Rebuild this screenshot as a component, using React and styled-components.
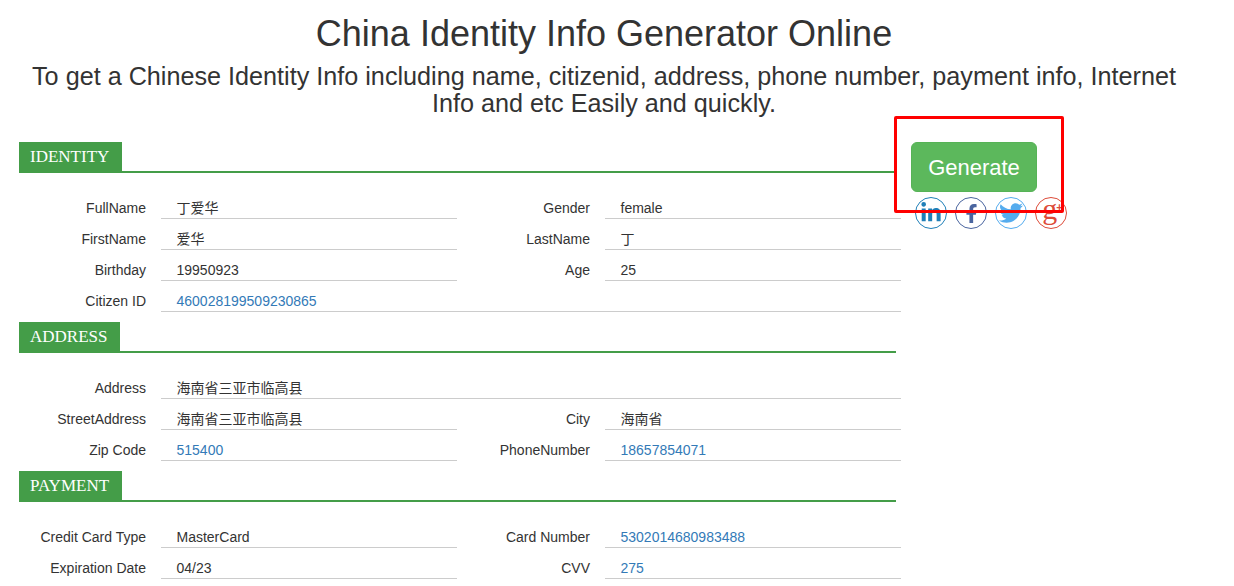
import React from "react";
import styled, { createGlobalStyle } from "styled-components";
import { FaLinkedinIn, FaFacebookF, FaTwitter } from "react-icons/fa";

const GlobalStyle = createGlobalStyle`
    html, body {
        margin: 0;
        height: 586px;
        overflow: hidden;
        background: #fff;
        font-family: "Liberation Sans", "Noto Sans CJK SC", sans-serif;
        font-size: 14px;
        color: #333;
    }
`;

const Page = styled.div`
    position: relative;
    width: 1234px;
    height: 586px;
    overflow: hidden;
`;

const Header = styled.header`
    width: 1208px;
    text-align: center;
`;

const Title = styled.h1`
    margin: 0;
    padding-top: 14px;
    font-size: 36px;
    line-height: 40px;
    font-weight: 400;
`;

const Subtitle = styled.h3`
    margin: 9px 0 0;
    padding: 0 15px;
    font-size: 25.2px;
    line-height: 27px;
    font-weight: 400;
`;

const Columns = styled.div`
    display: flex;
    margin-top: 25px;
    padding-left: 19px;
`;

const Main = styled.main`
    width: 882px;
`;

const Section = styled.section`
    margin-bottom: 10px;
`;

const SectionHead = styled.div`
    width: 877px;
    height: 31px;
    box-sizing: border-box;
    border-bottom: 2px solid #449d48;
`;

const SectionLabel = styled.h4`
    display: inline-block;
    margin: 0;
    height: 31px;
    padding: 0 13px 0 11px;
    box-sizing: border-box;
    background: #449d48;
    color: #fff;
    font-family: "Liberation Serif", serif;
    font-size: 17px;
    font-weight: 400;
    line-height: 29px;
`;

const Rows = styled.div`
    display: grid;
    grid-template-columns: 127px 296px 118px 296px;
    grid-auto-rows: 31px;
    column-gap: 15px;
    margin-top: 15px;
`;

const Label = styled.label`
    padding-top: 10px;
    text-align: right;
    line-height: 20px;
`;

const Value = styled.div`
    grid-column: ${props => (props.wide ? "2 / 5" : "auto")};
    padding: 10px 0 0 15.5px;
    box-sizing: border-box;
    border-bottom: 1px solid #ccc;
    line-height: 20px;
    color: ${props => (props.link ? "#337ab7" : "#333")};
`;

const Side = styled.aside`
    padding-left: 10px;
`;

const GenerateButton = styled.button`
    display: block;
    width: 126px;
    height: 50px;
    padding: 2px 0 0;
    border: 1px solid #56b356;
    border-radius: 6px;
    background: #5cb85c;
    color: #fff;
    font-family: inherit;
    font-size: 22px;
`;

const Social = styled.div`
    display: flex;
    gap: 8px;
    margin: 5px 0 0 4px;
`;

const SocialLink = styled.a`
    display: flex;
    align-items: center;
    justify-content: center;
    width: 32px;
    height: 32px;
    box-sizing: border-box;
    border: 1px solid ${props => props.color};
    border-radius: 50%;
    color: ${props => props.color};
    font-size: ${props => props.size}px;
`;

const GoogleG = styled.span`
    font-family: "Liberation Serif", serif;
    font-size: 30px;
    line-height: 30px;
    margin: -9px 0 0 3px;
`;

const GooglePlus = styled.span`
    font-family: "Liberation Sans", sans-serif;
    font-size: 11px;
    font-weight: 700;
    line-height: 11px;
    margin: -12px 0 0 -1px;
`;

const Highlight = styled.div`
    position: absolute;
    left: 894px;
    top: 116px;
    width: 170px;
    height: 97px;
    box-sizing: border-box;
    border: 3px solid #f00;
    border-radius: 2px;
    pointer-events: none;
`;

const sections = [
    {
        title: "IDENTITY",
        fields: [
            { label: "FullName", value: "丁爱华" },
            { label: "Gender", value: "female" },
            { label: "FirstName", value: "爱华" },
            { label: "LastName", value: "丁" },
            { label: "Birthday", value: "19950923" },
            { label: "Age", value: "25" },
            { label: "Citizen ID", value: "460028199509230865", link: true, wide: true }
        ]
    },
    {
        title: "ADDRESS",
        fields: [
            { label: "Address", value: "海南省三亚市临高县", wide: true },
            { label: "StreetAddress", value: "海南省三亚市临高县" },
            { label: "City", value: "海南省" },
            { label: "Zip Code", value: "515400", link: true },
            { label: "PhoneNumber", value: "18657854071", link: true }
        ]
    },
    {
        title: "PAYMENT",
        fields: [
            { label: "Credit Card Type", value: "MasterCard" },
            { label: "Card Number", value: "5302014680983488", link: true },
            { label: "Expiration Date", value: "04/23" },
            { label: "CVV", value: "275", link: true }
        ]
    }
];

export default function App() {
    return (
        <Page>
            <GlobalStyle />
            <Header>
                <Title>China Identity Info Generator Online</Title>
                <Subtitle>
                    To get a Chinese Identity Info including name, citizenid, address, phone number, payment info, Internet Info and etc Easily and quickly.
                </Subtitle>
            </Header>
            <Columns>
                <Main>
                    {sections.map(section => (
                        <Section key={section.title}>
                            <SectionHead>
                                <SectionLabel>{section.title}</SectionLabel>
                            </SectionHead>
                            <Rows>
                                {section.fields.map(field => (
                                    <React.Fragment key={field.label}>
                                        <Label>{field.label}</Label>
                                        <Value link={field.link} wide={field.wide}>{field.value}</Value>
                                    </React.Fragment>
                                ))}
                            </Rows>
                        </Section>
                    ))}
                </Main>
                <Side>
                    <GenerateButton>Generate</GenerateButton>
                    <Social>
                        <SocialLink color="#1f7fb8" size={22}><FaLinkedinIn /></SocialLink>
                        <SocialLink color="#4a659f" size={19}><FaFacebookF /></SocialLink>
                        <SocialLink color="#55acee" size={24}><FaTwitter /></SocialLink>
                        <SocialLink color="#dd4b39">
                            <GoogleG>g</GoogleG>
                            <GooglePlus>+</GooglePlus>
                        </SocialLink>
                    </Social>
                </Side>
            </Columns>
            <Highlight />
        </Page>
    );
}
